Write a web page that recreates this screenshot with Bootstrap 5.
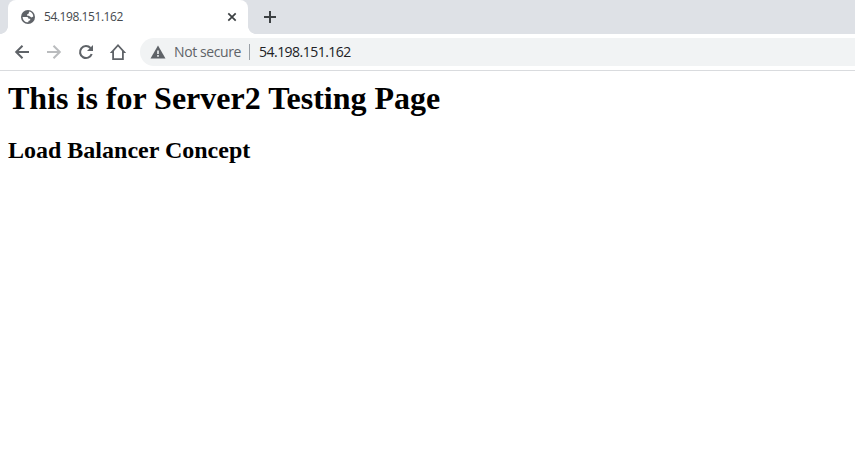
<!DOCTYPE html>
<html lang="en">
<head>
<meta charset="utf-8">
<meta name="viewport" content="width=device-width, initial-scale=1">
<title>54.198.151.162</title>
<link href="https://cdn.jsdelivr.net/npm/bootstrap@5.3.0/dist/css/bootstrap.min.css" rel="stylesheet">
<style>
body { font-family: "Open Sans", "Noto Sans", sans-serif; color: #000; }
svg { display: block; flex: none; }
.tab-strip { height: 34px; background: #dee1e6; padding-left: 8px; }
.browser-tab { width: 240px; height: 34px; border-radius: 8px 8px 0 0; padding: 0 10px 0 13px; color: #45494d; }
.browser-tab::before, .browser-tab::after { content: ""; position: absolute; bottom: 0; width: 8px; height: 8px; }
.browser-tab::before { left: -8px; background: radial-gradient(circle at 0 0, transparent 7.6px, #fff 8.2px); }
.browser-tab::after { right: -8px; background: radial-gradient(circle at 100% 0, transparent 7.6px, #fff 8.2px); }
.tab-title { font-size: 12px; line-height: 16px; letter-spacing: -.43px; margin-left: 9px; }
.new-tab { margin-left: 15px; }
.toolbar { height: 37px; border-bottom: 1px solid #d9dbde; padding-left: 11px; color: #5f6368; }
.nav-icons { gap: 10px; width: 129px; }
.omnibox { height: 28px; background: #f1f3f4; border-radius: 14px 0 0 14px; padding-left: 10px; font-size: 14px; line-height: 20px; }
.state { margin-left: 8px; width: 67px; letter-spacing: -.4px; }
.divider { width: 1px; height: 16px; background: #9aa0a6; margin: 0 9px 0 8px; }
.address { color: #202124; letter-spacing: -.52px; }
.document { font-family: "Liberation Serif", "Times New Roman", serif; padding: 9px 8px 0; }
.document h1 { font-size: 32px; line-height: 37px; margin: 0 0 20px; font-weight: 700; }
.document h2 { font-size: 24px; line-height: 27px; margin: 0; font-weight: 700; }
</style>
</head>
<body class="bg-white overflow-hidden">
<header>
  <div class="tab-strip d-flex align-items-center">
    <div class="browser-tab position-relative bg-white d-flex align-items-center">
      <svg width="14" height="14" viewBox="0 0 14 14"><circle cx="7" cy="7" r="7" fill="#5f6368"/><path d="M8.200 1.600C10.600 2 12.300 4.200 12.300 6.500L10.500 7.500 9 6.600 7.700 5.800H6.200V4.300L7.500 3.700zM1.600 7H5.500C6.800 7 7.500 7.700 7.500 8.700H9.200V10.300L7.400 10.900V12.300C4.300 12.600 1.600 10 1.600 7z" fill="#fff"/></svg>
      <span class="tab-title">54.198.151.162</span>
      <svg class="ms-auto" width="12" height="12" viewBox="0 0 12 12"><path d="m2.300 2.300 7.400 7.400m0-7.400-7.400 7.400" stroke="#3c4043" stroke-width="1.700"/></svg>
    </div>
    <svg class="new-tab" width="14" height="14" viewBox="0 0 14 14"><path d="M7 1v12M1 7h12" stroke="#3c4043" stroke-width="2"/></svg>
  </div>
  <nav class="toolbar d-flex align-items-center bg-white">
    <div class="nav-icons d-flex flex-shrink-0">
      <svg width="22" height="22" viewBox="0 0 22 22" fill="none" stroke="currentColor" stroke-width="2"><path d="M18 11H5.500M11.500 4.700 5.200 11l6.300 6.300"/></svg>
      <svg width="22" height="22" viewBox="0 0 22 22" fill="none" stroke="#babcbe" stroke-width="2"><path d="M4 11h12.500M10.500 4.700 16.800 11l-6.300 6.300"/></svg>
      <svg width="22" height="22" viewBox="0 0 22 22"><path d="M15.500 7A6 6 0 1 0 16.700 13" fill="none" stroke="currentColor" stroke-width="2.100"/><path d="M18 4v6h-6z" fill="currentColor"/></svg>
      <svg width="22" height="22" viewBox="0 0 22 22" fill="currentColor" fill-rule="evenodd"><path d="M11 2.900 19.200 12H16.800V19H5.200V12H2.800zM11 5.600 7 10V17.200H15V10z"/></svg>
    </div>
    <div class="omnibox d-flex align-items-center flex-grow-1">
      <svg width="16" height="14" viewBox="0 0 16 14"><path d="M8 .5 15.500 13.500H.5z" fill="#5f6368"/><path d="M7.200 5.500h1.600v3.500H7.200zm0 4.600h1.600v1.600H7.200z" fill="#f1f3f4"/></svg>
      <span class="state text-nowrap">Not secure</span>
      <span class="divider"></span>
      <span class="address">54.198.151.162</span>
    </div>
  </nav>
</header>
<main class="document">
  <h1>This is for Server2 Testing Page</h1>
  <h2>Load Balancer Concept</h2>
</main>
<script src="https://cdn.jsdelivr.net/npm/bootstrap@5.3.0/dist/js/bootstrap.bundle.min.js"></script>
</body>
</html>
